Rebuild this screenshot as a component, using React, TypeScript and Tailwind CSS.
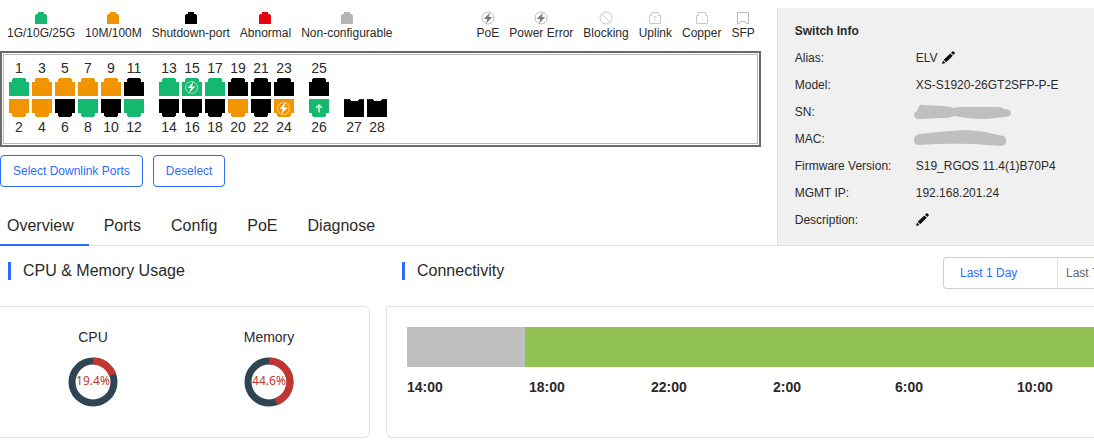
import type { ReactNode } from "react";

type PortState = "up" | "slow" | "down";

interface Port {
  id: number;
  state: PortState;
  mark?: "poe" | "uplink";
  sfp?: boolean;
}

const fills: Record<PortState, string> = {
  up: "#14b86f",
  slow: "#f09400",
  down: "#000000",
};

const states = [
  { label: "1G/10G/25G", color: "#14b86f" },
  { label: "10M/100M", color: "#f09400" },
  { label: "Shutdown-port", color: "#000000" },
  { label: "Abnormal", color: "#e60012" },
  { label: "Non-configurable", color: "#b5b5b5" },
];

// Each column holds the odd port on top and the even port below
const portGroups: { top?: Port; bottom: Port }[][] = [
  [
    { top: { id: 1, state: "up" }, bottom: { id: 2, state: "slow" } },
    { top: { id: 3, state: "slow" }, bottom: { id: 4, state: "slow" } },
    { top: { id: 5, state: "slow" }, bottom: { id: 6, state: "down" } },
    { top: { id: 7, state: "slow" }, bottom: { id: 8, state: "up" } },
    { top: { id: 9, state: "slow" }, bottom: { id: 10, state: "down" } },
    { top: { id: 11, state: "down" }, bottom: { id: 12, state: "up" } },
  ],
  [
    { top: { id: 13, state: "up" }, bottom: { id: 14, state: "down" } },
    { top: { id: 15, state: "up", mark: "poe" }, bottom: { id: 16, state: "down" } },
    { top: { id: 17, state: "up" }, bottom: { id: 18, state: "down" } },
    { top: { id: 19, state: "down" }, bottom: { id: 20, state: "slow" } },
    { top: { id: 21, state: "down" }, bottom: { id: 22, state: "down" } },
    { top: { id: 23, state: "down" }, bottom: { id: 24, state: "slow", mark: "poe" } },
  ],
  [{ top: { id: 25, state: "down" }, bottom: { id: 26, state: "up", mark: "uplink" } }],
  [
    { bottom: { id: 27, state: "down", sfp: true } },
    { bottom: { id: 28, state: "down", sfp: true } },
  ],
];

const tabs = ["Overview", "Ports", "Config", "PoE", "Diagnose"];

const hours = ["14:00", "18:00", "22:00", "2:00", "6:00", "10:00"];

function PortIcon({ port, flipped = false }: { port: Port; flipped?: boolean }) {
  const fill = fills[port.state];
  return (
    <svg width="20" height="18" viewBox="0 0 20 18" className="block">
      {port.sfp ? (
        <>
          <path d="M0 0H6V1H7V2H14V1H15V0H20V18H0Z" fill={fill} />
          <path d="M0 .5H5M15 .5H20" stroke="#0d2a3c" />
        </>
      ) : (
        <path
          d="M4 0H16V1H17V4H20V18H0V4H3V1H4Z"
          fill={fill}
          transform={flipped ? "rotate(180 10 9)" : undefined}
        />
      )}
      {port.mark === "poe" && (
        <>
          <circle cx="9.5" cy="9.5" r="6" fill="none" stroke="#fff" strokeOpacity=".6" />
          <path d="M11.5 3.5 5.5 10H9L7 15 13.5 8.5H10Z" fill="#fff" />
        </>
      )}
      {port.mark === "uplink" && (
        <path
          d="M10 13.5V6M7 9l3-3 3 3"
          fill="none"
          stroke="#fff"
          strokeOpacity=".85"
          strokeWidth="1.5"
        />
      )}
    </svg>
  );
}

function LegendItem({ label, children }: { label: string; children: ReactNode }) {
  return (
    <li className="flex flex-col items-center">
      <span className="flex h-3 items-center">{children}</span>
      <span className="text-xs leading-[18px] whitespace-nowrap">{label}</span>
    </li>
  );
}

function LegendGlyph({ children }: { children: ReactNode }) {
  return (
    <svg width="14" height="14" viewBox="0 0 14 14" fill="none" stroke="#c8c8c8">
      {children}
    </svg>
  );
}

function BoltGlyph() {
  return (
    <LegendGlyph>
      <circle cx="7" cy="7" r="6" stroke="#bdbdbd" />
      <path d="M9 1.5 2.8 8H6.2L5 12.5 11.2 6H7.8Z" fill="#777" stroke="none" />
    </LegendGlyph>
  );
}

function Legend() {
  return (
    <div className="flex justify-between pr-[6px] pl-[7px]">
      <ul className="flex gap-[10px]">
        {states.map(({ label, color }) => (
          <LegendItem key={label} label={label}>
            <svg width="12" height="12" viewBox="0 0 12 12">
              <path d="M3 0H9V2H11V3H12V12H0V3H1V2H3Z" fill={color} />
            </svg>
          </LegendItem>
        ))}
      </ul>
      <ul className="flex gap-[10px]">
        <LegendItem label="PoE">
          <BoltGlyph />
        </LegendItem>
        <LegendItem label="Power Error">
          <BoltGlyph />
        </LegendItem>
        <LegendItem label="Blocking">
          <LegendGlyph>
            <circle cx="7" cy="7" r="6" />
            <path d="M3 3l8 8" />
          </LegendGlyph>
        </LegendItem>
        <LegendItem label="Uplink">
          <LegendGlyph>
            <path d="M3.5 1.5H10.5V4.5H12.5V12.5H1.5V4.5H3.5Z" />
            <path d="M7 11V5M5 7l2-2 2 2" strokeOpacity=".7" />
          </LegendGlyph>
        </LegendItem>
        <LegendItem label="Copper">
          <LegendGlyph>
            <path d="M3.5 1.5H10.5V4.5H12.5V12.5H1.5V4.5H3.5Z" />
          </LegendGlyph>
        </LegendItem>
        <LegendItem label="SFP">
          <LegendGlyph>
            <path d="M1.5 1.5H12.5V12.5H10.5L9.5 10.5H4.5L3.5 12.5H1.5Z" stroke="#bdbdbd" />
          </LegendGlyph>
        </LegendItem>
      </ul>
    </div>
  );
}

function PortPanel() {
  return (
    <div className="mt-[9px] border-2 border-[#6b6b6b] p-px">
      <div className="flex gap-[15px] border border-[#b8b8b8] px-[5px] pt-1 pb-[6px] text-sm leading-[19px]">
        {portGroups.map((group, i) => (
          <div key={i} className="flex items-end gap-[3px]">
            {group.map(({ top, bottom }) => (
              <div key={bottom.id} className="flex w-5 flex-col items-center">
                {top && (
                  <button type="button" className="mb-[3px] flex flex-col items-center">
                    <span>{top.id}</span>
                    <PortIcon port={top} />
                  </button>
                )}
                <button type="button" className="flex flex-col items-center gap-px">
                  <PortIcon port={bottom} flipped />
                  <span>{bottom.id}</span>
                </button>
              </div>
            ))}
          </div>
        ))}
      </div>
    </div>
  );
}

function EditButton({ label }: { label: string }) {
  return (
    <button type="button" aria-label={label}>
      <svg width="13" height="13" viewBox="0 0 13 13" className="block" fill="#111">
        <path d="M0 13 1 9.5 3.5 12ZM1.7 8.8 8.3 2.4 10.8 4.8 4.2 11.3ZM9 1.7 10.5.3Q11 0 11.5.4L12.7 1.6Q13.1 2.1 12.7 2.6L11.4 4Z" />
      </svg>
    </button>
  );
}

const info: { label: string; value: ReactNode }[] = [
  {
    label: "Alias:",
    value: (
      <>
        ELV <EditButton label="Edit alias" />
      </>
    ),
  },
  { label: "Model:", value: "XS-S1920-26GT2SFP-P-E" },
  {
    label: "SN:",
    value: (
      <svg width="98" height="16" viewBox="0 0 98 16" className="-ml-0.5 shrink-0" fill="#bfbfbf">
        <path d="M5 2Q6 0 10 1L30 2Q36 3 40 4L46 3H84Q88 3 90 5Q97 5 97 9Q97 13 90 13L72 15Q55 15 40 12Q34 15 26 14L5 15Q0 15 0 11Q0 8 3 7Z" />
      </svg>
    ),
  },
  {
    label: "MAC:",
    value: (
      <svg width="93" height="17" viewBox="0 0 93 17" className="-ml-0.5 shrink-0" fill="#bfbfbf">
        <path d="M5 4Q30 1 52 0Q70 1 80 4L89 6Q93 7 92 12Q91 16 87 16L60 14Q30 13 5 15Q0 15 0 10Q0 5 5 4Z" />
      </svg>
    ),
  },
  { label: "Firmware Version:", value: "S19_RGOS 11.4(1)B70P4" },
  { label: "MGMT IP:", value: "192.168.201.24" },
  { label: "Description:", value: <EditButton label="Edit description" /> },
];

function SwitchInfo() {
  return (
    <aside className="mt-2 min-w-0 flex-1 border-l border-[#e0e0e0] bg-[#f0f0f0] pt-[13px] pb-3 pl-[17px] text-xs">
      <h2 className="leading-5 font-bold">Switch Info</h2>
      <dl className="mt-[3px]">
        {info.map(({ label, value }) => (
          <div key={label} className="flex h-[27px] items-center">
            <dt className="w-[121px] shrink-0">{label}</dt>
            <dd className="flex items-center gap-1 whitespace-nowrap">{value}</dd>
          </div>
        ))}
      </dl>
    </aside>
  );
}

function SectionTitle({ children }: { children: ReactNode }) {
  return (
    <h2 className="flex items-center gap-3 text-base leading-6">
      <span className="h-[18px] w-[3px] bg-[#2b6bff]" />
      {children}
    </h2>
  );
}

function Gauge({ label, value }: { label: string; value: number }) {
  return (
    <div className="flex w-[176px] flex-col items-center">
      <h3 className="text-sm leading-5">{label}</h3>
      <svg width="50" height="50" viewBox="0 0 50 50" className="mt-[10px] block">
        <circle cx="25" cy="25" r="21" fill="none" stroke="#2f4554" strokeWidth="7" />
        <circle
          cx="25"
          cy="25"
          r="21"
          fill="none"
          stroke="#c23531"
          strokeWidth="7"
          pathLength="100"
          strokeDasharray={`${value} 100`}
          transform="rotate(-90 25 25)"
        />
        <text
          x="25"
          y="28"
          textAnchor="middle"
          fill="#c23531"
          className="font-['Noto_Sans',sans-serif] text-xs"
        >
          {value}%
        </text>
      </svg>
    </div>
  );
}

export default function App() {
  return (
    <div className="overflow-hidden bg-white font-['Liberation_Sans',Arial,sans-serif] text-[#2a2a2a]">
      <header className="flex border-b border-[#e0e0e0]">
        <div className="flex w-[71%] shrink-0 flex-col pt-3">
          <div className="pr-4">
            <Legend />
            <PortPanel />
            <div className="mt-2 flex gap-[10px] text-xs text-[#2b6bff]">
              <button type="button" className="h-8 rounded border border-[#2b6bff] px-3">
                Select Downlink Ports
              </button>
              <button type="button" className="h-8 rounded border border-[#2b6bff] px-3">
                Deselect
              </button>
            </div>
          </div>
          <nav className="-mb-px mt-auto flex text-base">
            {tabs.map((tab, i) => (
              <a
                key={tab}
                href={`#${tab.toLowerCase()}`}
                aria-current={i === 0 ? "page" : undefined}
                className={`h-10 border-b-2 pr-[15px] leading-10 ${
                  i === 0 ? "border-[#2b6bff] pl-[7px]" : "border-transparent pl-[15px]"
                }`}
              >
                {tab}
              </a>
            ))}
          </nav>
        </div>
        <SwitchInfo />
      </header>

      <main className="flex gap-4">
        <section className="w-[370px] shrink-0">
          <div className="flex h-[60px] items-center pb-[10px] pl-2">
            <SectionTitle>CPU &amp; Memory Usage</SectionTitle>
          </div>
          <div className="flex h-[132px] rounded-r-md border border-l-0 border-[#e2e2e2] pt-5 pl-[5px]">
            <Gauge label="CPU" value={19.4} />
            <Gauge label="Memory" value={44.6} />
          </div>
        </section>

        <section className="min-w-0 flex-1">
          <div className="flex h-[60px] items-center justify-between pb-[10px] pl-4">
            <SectionTitle>Connectivity</SectionTitle>
            <div className="mt-1 flex h-8 w-[151px] overflow-hidden rounded-l border border-r-0 border-[#cfcfcf] text-xs">
              <button type="button" className="w-[113px] shrink-0 pl-4 text-left text-[#2b6bff]">
                Last 1 Day
              </button>
              <button
                type="button"
                className="shrink-0 border-l border-[#e0e0e0] px-2 whitespace-nowrap text-[#666]"
              >
                Last 7 Days
              </button>
            </div>
          </div>
          <div className="h-[132px] rounded-bl-md border border-r-0 border-[#e2e2e2] pt-5 pl-5">
            <div className="flex h-10">
              <div className="w-[118px] bg-[#bfbfbf]" />
              <div className="flex-1 bg-[#91c153]" />
            </div>
            <ol className="mt-[10px] flex text-sm font-bold">
              {hours.map((hour) => (
                <li key={hour} className="w-[122px] shrink-0">
                  {hour}
                </li>
              ))}
            </ol>
          </div>
        </section>
      </main>
    </div>
  );
}
